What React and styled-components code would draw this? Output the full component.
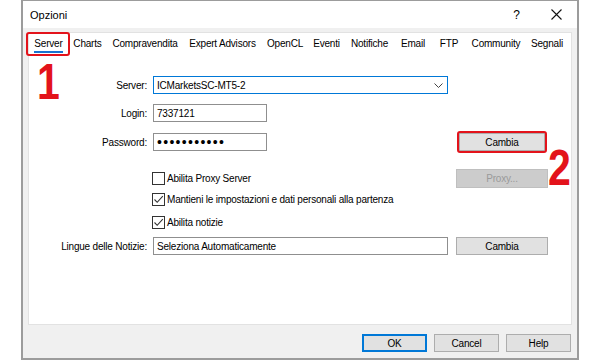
import React from "react";
import styled, { createGlobalStyle } from "styled-components";

const GlobalStyle = createGlobalStyle`
    html, body {
        margin: 0;
        padding: 0;
        background: #ffffff;
    }
    body {
        width: 600px;
        height: 360px;
        overflow: hidden;
        font-family: "Liberation Sans", Arial, sans-serif;
        font-size: 10px;
        letter-spacing: -0.2px;
        color: #000;
    }
`;

const tabs = [
    { name: "Server", width: 39, active: true },
    { name: "Charts", width: 39 },
    { name: "Compravendita", width: 76 },
    { name: "Expert Advisors", width: 79 },
    { name: "OpenCL", width: 46 },
    { name: "Eventi", width: 37 },
    { name: "Notifiche", width: 49 },
    { name: "Email", width: 38 },
    { name: "FTP", width: 34 },
    { name: "Community", width: 60 },
    { name: "Segnali", width: 42 },
];

const App = () => {
    return (
        <>
            <GlobalStyle />
            <Window>
                <TitleBar>
                    <Title>Opzioni</Title>
                    <TitleControls>
                        <HelpMark>?</HelpMark>
                        <svg width="11" height="11" viewBox="0 0 11 11">
                            <path d="M0.5 0.5 L10.5 10.5 M10.5 0.5 L0.5 10.5" stroke="#111" strokeWidth="1.1" fill="none" />
                        </svg>
                    </TitleControls>
                </TitleBar>

                <Body>
                    <Panel>
                        <TabRow>
                            {tabs.map((tab) => (
                                <Tab key={tab.name} $width={tab.width} $active={tab.active}>
                                    <TabLabel $active={tab.active}>{tab.name}</TabLabel>
                                </Tab>
                            ))}
                        </TabRow>

                        <Form>
                            <FormRow $top={21}>
                                <Label>Server:</Label>
                                <Combo>
                                    <span>ICMarketsSC-MT5-2</span>
                                    <svg width="9" height="5" viewBox="0 0 9 5">
                                        <path d="M0.5 0.5 L4.5 4.5 L8.5 0.5" stroke="#444" strokeWidth="1" fill="none" />
                                    </svg>
                                </Combo>
                            </FormRow>

                            <FormRow $top={10}>
                                <Label>Login:</Label>
                                <Field $width={114}>7337121</Field>
                            </FormRow>

                            <FormRow $top={11}>
                                <Label>Password:</Label>
                                <Field $width={114}>
                                    <Dots>•••••••••••</Dots>
                                </Field>
                                <Button $highlight>Cambia</Button>
                            </FormRow>

                            <FormRow $top={18} $height={19}>
                                <span />
                                <Check label="Abilita Proxy Server" />
                                <Button $disabled $height={19}>Proxy...</Button>
                            </FormRow>

                            <FormRow $top={2}>
                                <span />
                                <Check checked label="Mantieni le impostazioni e dati personali alla partenza" />
                            </FormRow>

                            <FormRow $top={5}>
                                <span />
                                <Check checked label="Abilita notizie" />
                            </FormRow>

                            <FormRow $top={6}>
                                <Label>Lingue delle Notizie:</Label>
                                <Field>Seleziona Automaticamente</Field>
                                <Button>Cambia</Button>
                            </FormRow>
                        </Form>
                    </Panel>
                </Body>

                <Footer>
                    <FooterButton $default>OK</FooterButton>
                    <FooterButton>Cancel</FooterButton>
                    <FooterButton>Help</FooterButton>
                </Footer>

                <Marker $left={14} $top={56}>1</Marker>
                <Marker $left={525} $top={142}>2</Marker>
            </Window>
        </>
    );
};

const Check = ({ checked, label }) => (
    <CheckWrap>
        <Box>
            {checked && (
                <svg width="11" height="11" viewBox="0 0 11 11">
                    <path d="M1.5 5.5 L4.2 8.3 L9.8 2.2" stroke="#333" strokeWidth="1.1" fill="none" />
                </svg>
            )}
        </Box>
        <span>{label}</span>
    </CheckWrap>
);

const Window = styled.div`
    position: relative;
    box-sizing: border-box;
    margin-left: 21px;
    width: 558px;
    height: 360px;
    border: 2px solid #9c9c9c;
    border-top-width: 1px;
    background: #f0f0f0;
    display: flex;
    flex-direction: column;
`;

const TitleBar = styled.div`
    height: 27px;
    background: #ffffff;
    display: flex;
    align-items: center;
    padding: 0 15px 0 7px;
`;

const Title = styled.div`
    font-size: 11px;
    letter-spacing: 0;
`;

const TitleControls = styled.div`
    margin-left: auto;
    display: flex;
    align-items: center;
    gap: 31px;
`;

const HelpMark = styled.span`
    font-size: 12px;
    letter-spacing: 0;
`;

const Body = styled.div`
    flex: 1;
    display: flex;
    flex-direction: column;
    padding: 4px 5px 0 5px;
`;

const Panel = styled.div`
    flex: 1;
    background: #ffffff;
    border: 1px solid #e2e2e2;
    display: flex;
    flex-direction: column;
`;

const TabRow = styled.div`
    display: flex;
    height: 22px;
`;

const Tab = styled.div`
    position: relative;
    width: ${(p) => p.$width}px;
    display: flex;
    align-items: center;
    justify-content: center;

    ${(p) => p.$active && `
        &::after {
            content: "";
            position: absolute;
            left: -3px;
            right: -2px;
            top: -1px;
            bottom: -1px;
            border: 2.5px solid #e3131b;
            border-radius: 3px;
        }
    `}
`;

const TabLabel = styled.span`
    line-height: 12px;
    padding: ${(p) => (p.$active ? "2px 0 1px" : "0")};
    border-bottom: ${(p) => (p.$active ? "2px solid #1a73d0" : "none")};
`;

const Form = styled.div`
    display: flex;
    flex-direction: column;
`;

const FormRow = styled.div`
    display: grid;
    grid-template-columns: 118px 295px 94px;
    column-gap: 6px;
    align-items: center;
    height: ${(p) => p.$height || 18}px;
    margin-top: ${(p) => p.$top}px;
`;

const Label = styled.div`
    text-align: right;
`;

const Field = styled.div`
    box-sizing: border-box;
    width: ${(p) => (p.$width ? `${p.$width}px` : "100%")};
    height: 18px;
    border: 1px solid #8f8f8f;
    background: #ffffff;
    padding-left: 3px;
    display: flex;
    align-items: center;
`;

const Combo = styled(Field)`
    border-color: #0078d7;
    justify-content: space-between;
    padding-right: 4px;
`;

const Dots = styled.span`
    font-size: 14px;
    letter-spacing: 1.3px;
    line-height: 14px;
`;

const Button = styled.div`
    position: relative;
    box-sizing: border-box;
    justify-self: ${(p) => (p.$highlight ? "start" : "end")};
    margin-left: ${(p) => (p.$highlight ? "5px" : "0")};
    width: ${(p) => (p.$highlight ? 86 : 92)}px;
    height: ${(p) => p.$height || 18}px;
    background: ${(p) => (p.$disabled ? "#cccccc" : "#e1e1e1")};
    border: 1px solid ${(p) => (p.$disabled ? "#bfbfbf" : "#adadad")};
    color: ${(p) => (p.$disabled ? "#9a9a9a" : "#000")};
    display: flex;
    align-items: center;
    justify-content: center;

    ${(p) => p.$highlight && `
        &::after {
            content: "";
            position: absolute;
            left: -3px;
            right: -3px;
            top: -3px;
            bottom: -3px;
            border: 2.5px solid #e3131b;
            border-radius: 3px;
        }
    `}
`;

const CheckWrap = styled.div`
    display: flex;
    align-items: center;
    gap: 2px;
    margin-left: -1px;
    white-space: nowrap;
`;

const Box = styled.div`
    box-sizing: border-box;
    width: 13px;
    height: 13px;
    border: 1px solid #333;
    background: #fff;
    display: flex;
    align-items: center;
    justify-content: center;
`;

const Footer = styled.div`
    height: 33px;
    display: flex;
    justify-content: flex-end;
    align-items: flex-start;
    gap: 7px;
    padding: 9px 6px 0 0;
    box-sizing: border-box;
`;

const FooterButton = styled.div`
    box-sizing: border-box;
    width: 65px;
    height: 18px;
    background: #e1e1e1;
    border: 1px solid ${(p) => (p.$default ? "#0078d7" : "#adadad")};
    box-shadow: ${(p) => (p.$default ? "inset 0 0 0 1px #0078d7" : "none")};
    display: flex;
    align-items: center;
    justify-content: center;
`;

const Marker = styled.div`
    position: absolute;
    left: ${(p) => p.$left}px;
    top: ${(p) => p.$top}px;
    font-family: "Liberation Sans", Arial, sans-serif;
    font-weight: 700;
    font-size: 50px;
    line-height: 50px;
    letter-spacing: 0;
    color: #e3131b;
    transform: scaleX(0.82);
    transform-origin: left top;
`;

export default App;
